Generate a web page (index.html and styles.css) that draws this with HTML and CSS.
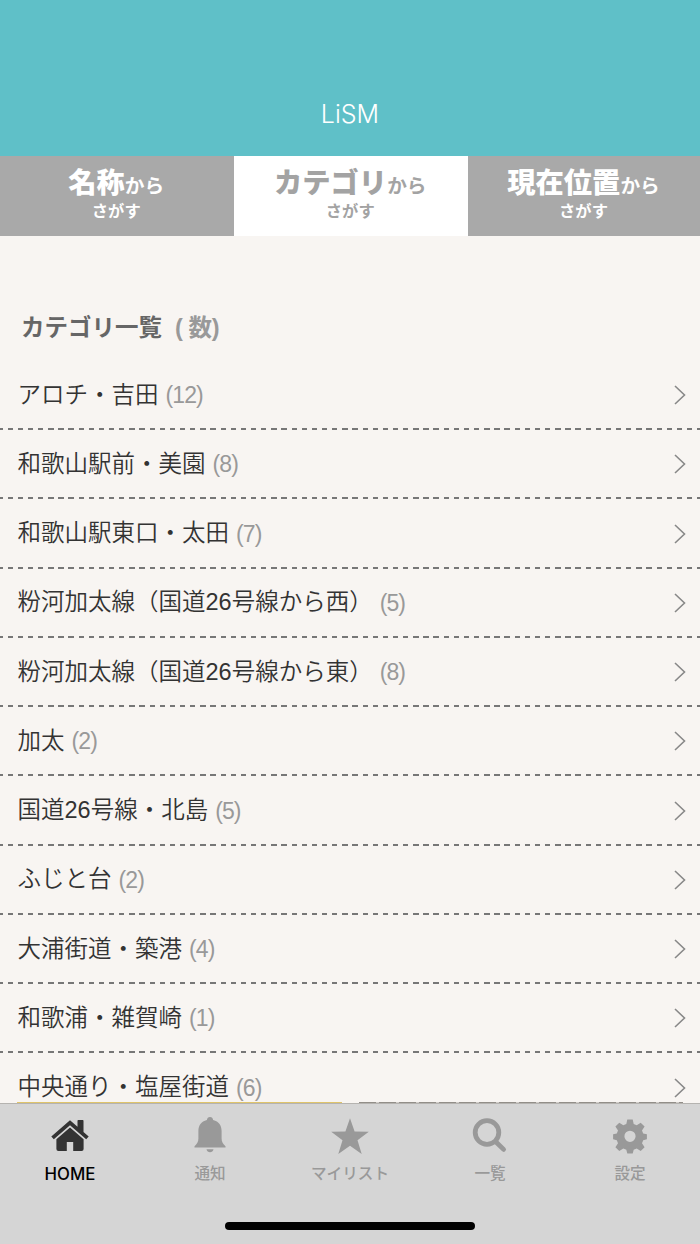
FILE: index.html
```html
<!doctype html>
<html lang="ja">
<head>
    <meta charset="UTF-8">
    <title>LiSM</title>
    <link rel="stylesheet" href="styles.css">
</head>
<body>
    <header class="header">
        <h1>LiSM</h1>
    </header>

    <nav class="tabs">
        <a class="tab"><span class="tab-main"><b>名称</b>から</span><span class="tab-sub">さがす</span></a>
        <a class="tab active"><span class="tab-main"><b>カテゴリ</b>から</span><span class="tab-sub">さがす</span></a>
        <a class="tab"><span class="tab-main"><b>現在位置</b>から</span><span class="tab-sub">さがす</span></a>
    </nav>

    <main class="content">
        <h2>カテゴリ一覧<span>( 数)</span></h2>
        <ul class="list">
            <li><span class="name">アロチ・吉田</span><span class="count">(12)</span><svg class="arrow" viewBox="0 0 12 20"><path d="M1 1l9.5 9L1 19"/></svg></li>
            <li><span class="name">和歌山駅前・美園</span><span class="count">(8)</span><svg class="arrow" viewBox="0 0 12 20"><path d="M1 1l9.5 9L1 19"/></svg></li>
            <li><span class="name">和歌山駅東口・太田</span><span class="count">(7)</span><svg class="arrow" viewBox="0 0 12 20"><path d="M1 1l9.5 9L1 19"/></svg></li>
            <li><span class="name">粉河加太線（国道26号線から西）</span><span class="count">(5)</span><svg class="arrow" viewBox="0 0 12 20"><path d="M1 1l9.5 9L1 19"/></svg></li>
            <li><span class="name">粉河加太線（国道26号線から東）</span><span class="count">(8)</span><svg class="arrow" viewBox="0 0 12 20"><path d="M1 1l9.5 9L1 19"/></svg></li>
            <li><span class="name">加太</span><span class="count">(2)</span><svg class="arrow" viewBox="0 0 12 20"><path d="M1 1l9.5 9L1 19"/></svg></li>
            <li><span class="name">国道26号線・北島</span><span class="count">(5)</span><svg class="arrow" viewBox="0 0 12 20"><path d="M1 1l9.5 9L1 19"/></svg></li>
            <li><span class="name">ふじと台</span><span class="count">(2)</span><svg class="arrow" viewBox="0 0 12 20"><path d="M1 1l9.5 9L1 19"/></svg></li>
            <li><span class="name">大浦街道・築港</span><span class="count">(4)</span><svg class="arrow" viewBox="0 0 12 20"><path d="M1 1l9.5 9L1 19"/></svg></li>
            <li><span class="name">和歌浦・雑賀崎</span><span class="count">(1)</span><svg class="arrow" viewBox="0 0 12 20"><path d="M1 1l9.5 9L1 19"/></svg></li>
            <li><span class="name">中央通り・塩屋街道</span><span class="count">(6)</span><svg class="arrow" viewBox="0 0 12 20"><path d="M1 1l9.5 9L1 19"/></svg></li>
        </ul>
        <!-- top edge of the banners behind the tab bar -->
        <div class="banners">
            <div class="banner yellow"></div>
            <div class="banner dark"></div>
        </div>
    </main>

    <footer class="tabbar">
        <div class="items">
            <a class="item current">
                <svg viewBox="0 0 40 40">
                    <path d="M20 3.3L1.300 19.600l2.500 2.700L20 8.200l16.200 14.100 2.500-2.700-5.200-4.600V3.800q0-.8-.8-.8h-4.400q-.8 0-.8.8v5.900z"/>
                    <path d="M20 10.500L6.400 22.300V32q0 2 2 2h8.400v-9h6.400v9h8.400q2 0 2-2v-9.700z"/>
                </svg>
                <span>HOME</span>
            </a>
            <a class="item">
                <svg viewBox="0 0 40 40">
                    <path d="M20 0q2.700 0 3.100 3C29 4.400 31.600 8.500 31.600 14v7.500c0 3.500 1.400 5.500 3.900 7.700V30.500h-31v-1.300c2.500-2.200 3.900-4.200 3.900-7.700V14C8.400 8.500 11 4.400 16.900 3Q17.300 0 20 0z"/>
                    <path d="M16.500 32.300h7c-.5 3.800-6.500 3.800-7 0z"/>
                </svg>
                <span>通知</span>
            </a>
            <a class="item">
                <svg viewBox="0 0 40 40">
                    <path d="M20 1.200l4.600 13.200 14.200.3-11.300 8.600 4.200 13.700L20 28.800 8.300 37l4.200-13.700L1.200 14.700l14.200-.3z"/>
                </svg>
                <span>マイリスト</span>
            </a>
            <a class="item">
                <svg viewBox="0 0 40 40">
                    <circle class="line" cx="17" cy="15.500" r="11.800"/>
                    <path class="line" d="M26 25l7.600 7.400"/>
                </svg>
                <span>一覧</span>
            </a>
            <a class="item">
                <svg viewBox="0 0 40 40">
                    <path fill-rule="evenodd" d="M17.300 2.400h5.400l1 4.700 3 1.200 4-2.600 3.900 3.900-2.600 4 1.200 3 3.700.7v5l-3.700.9-1.200 3 2.600 4-3.900 3.800-4-2.500-3 1.200-1 3.700h-5.400l-1-3.700-3-1.200-4 2.500-3.900-3.800 2.600-4-1.200-3-3.700-.9v-5l3.700-.7 1.200-3-2.600-4 3.900-3.900 4 2.600 3-1.200zM20 13.700a5.600 5.600 0 1 0 0 11.200 5.600 5.600 0 0 0 0-11.200z"/>
                </svg>
                <span>設定</span>
            </a>
        </div>
        <div class="home-indicator"></div>
    </footer>
</body>
</html>
```

FILE: styles.css
```css
* {
    box-sizing: border-box;
}
body {
    margin: 0;
    height: 1244px;
    overflow: hidden;
    display: flex;
    flex-direction: column;
    font-family: "Liberation Sans", "Noto Sans CJK JP", sans-serif;
    background-color: #f8f5f2;
    color: #333;
}
.header {
    height: 155.500px;
    flex: none;
    background-color: #5fc0c8;
    padding-top: 96px;
}
h1 {
    margin: 0;
    font-family: Inter, sans-serif;
    font-size: 25px;
    font-weight: 300;
    line-height: 36px;
    text-align: center;
    color: #fff;
}
.tabs {
    display: grid;
    grid-template-columns: 233.500px 234.500px 1fr;
    height: 80.200px;
    flex: none;
}
.tab {
    display: flex;
    flex-direction: column;
    align-items: center;
    padding: 9px 1px 0 0;
    background-color: #a9a9a9;
    color: #fff;
    font-weight: bold;
}
.tab.active {
    background-color: #fff;
    color: #a3a3a3;
}
.tab-main {
    height: 36px;
    font-size: 19.700px;
    line-height: 37px;
}
.tab-main b {
    font-size: 28.300px;
}
.tab-sub {
    font-size: 16.300px;
    line-height: 20px;
}
.content {
    flex: 1;
    min-height: 0;
    overflow: hidden;
    display: flex;
    flex-direction: column;
}
h2 {
    margin: 0;
    padding: 74px 0 0 21px;
    height: 125.300px;
    flex: none;
    font-size: 23.500px;
    line-height: 36px;
    color: #666;
}
h2 span {
    margin-left: 13px;
    letter-spacing: -0.4px;
    color: #999;
}
.list {
    list-style: none;
    margin: 0;
    padding: 0;
    flex: 1;
    min-height: 0;
    overflow: hidden;
}
.list li {
    display: flex;
    align-items: center;
    height: 69.250px;
    padding: 0 14px 1px 17.500px;
    font-size: 23.500px;
    line-height: 34px;
    background: repeating-linear-gradient(90deg, #777 0 2.800px, transparent 2.800px 7.600px, #777 7.600px 10.140px) 0 100% / 100% 2px no-repeat;
}
.name {
    font-weight: 350;
    padding-bottom: 1px;
}
.count {
    margin-left: 7px;
    font-size: 23px;
    letter-spacing: -0.9px;
    color: #999;
}
.arrow {
    width: 12px;
    height: 20px;
    margin-left: auto;
    fill: none;
    stroke: #888;
    stroke-width: 1.600;
}
.banners {
    display: flex;
    gap: 17px;
    height: 1px;
    flex: none;
    padding: 0 17px;
}
.banner {
    flex: 1;
}
.yellow {
    background-color: #dfc46b;
}
.dark {
    background: repeating-linear-gradient(90deg, #928e88 0 17px, #d0ccc8 17px 20px);
}
.tabbar {
    height: 141px;
    flex: none;
    border-top: 1px solid #b5b3b0;
    background-color: #d5d5d5;
}
.items {
    display: flex;
    height: 118px;
}
.item {
    flex: 1;
    display: flex;
    flex-direction: column;
    align-items: center;
    padding-top: 13px;
    color: #999;
    font-family: "Noto Sans CJK JP", sans-serif;
    font-size: 15.600px;
    font-weight: 500;
    line-height: 24px;
}
.item svg {
    width: 40px;
    height: 40px;
    margin-bottom: 3px;
    fill: #999;
}
.item .line {
    fill: none;
    stroke: #999;
    stroke-width: 4.800;
    stroke-linecap: round;
}
.item.current {
    color: #000;
    font-family: Inter, "Noto Sans CJK JP", sans-serif;
    font-size: 16.800px;
}
.item.current svg {
    margin-bottom: 5px;
    fill: #333;
}
.home-indicator {
    width: 250px;
    height: 8px;
    margin: 0 auto;
    border-radius: 4px;
    background-color: #000;
}
```
